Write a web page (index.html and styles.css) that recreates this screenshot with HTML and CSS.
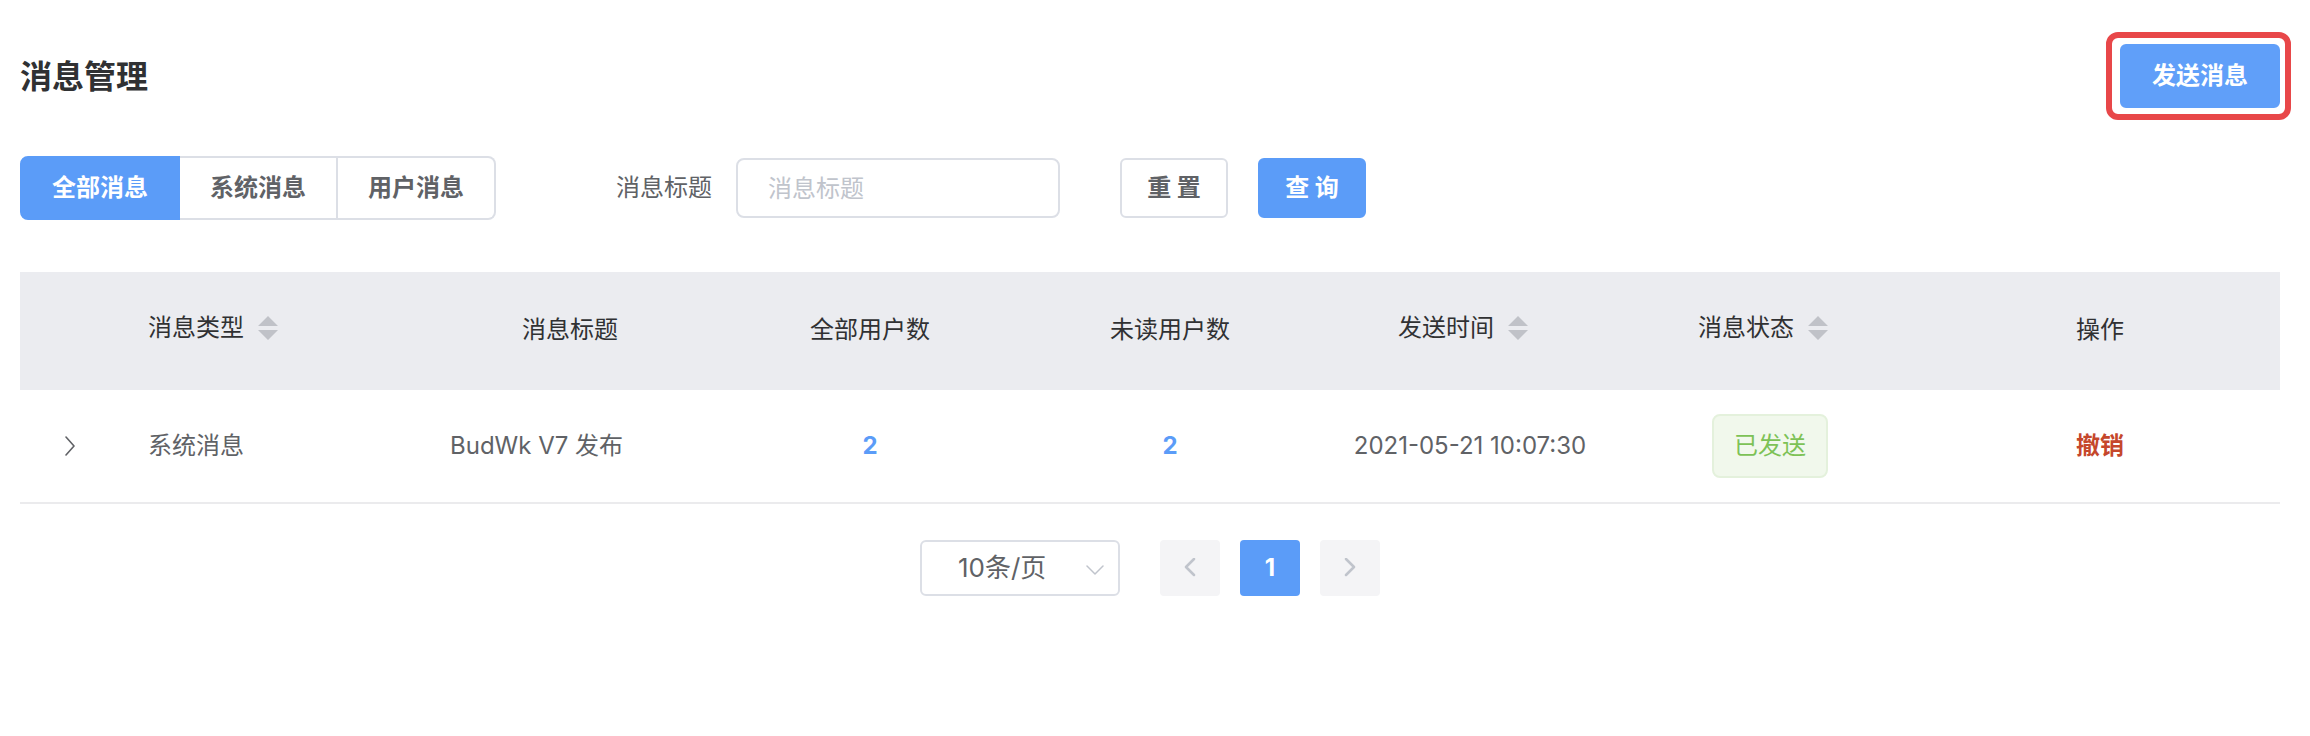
FILE: index.html
```html
<!DOCTYPE html>
<html lang="zh-CN">
<head>
<meta charset="utf-8">
<meta name="viewport" content="width=device-width, initial-scale=1">
<title>消息管理</title>
<link rel="stylesheet" href="styles.css">
</head>
<body>
<main class="page">
  <header class="page-header">
    <h1 class="page-title">消息管理</h1>
    <div class="highlight">
      <button class="btn btn-primary btn-send" type="button">发送消息</button>
    </div>
  </header>

  <form class="toolbar">
    <div class="tabs">
      <button class="tab tab-active" type="button">全部消息</button>
      <button class="tab" type="button">系统消息</button>
      <button class="tab" type="button">用户消息</button>
    </div>
    <div class="field">
      <label class="field-label" for="title">消息标题</label>
      <input class="field-input" id="title" type="text" placeholder="消息标题">
    </div>
    <div class="actions">
      <button class="btn btn-plain" type="button">重 置</button>
      <button class="btn btn-primary" type="button">查 询</button>
    </div>
  </form>

  <table class="table">
    <colgroup>
      <col class="col-expand">
      <col class="col-data"><col class="col-data"><col class="col-data">
      <col class="col-data"><col class="col-data"><col class="col-data">
      <col class="col-action">
    </colgroup>
    <thead>
      <tr>
        <th></th>
        <th class="left"><span class="sortable">消息类型<svg class="caret" width="20" height="24" viewBox="0 0 20 24" aria-hidden="true"><path d="M10 0L20 10H0zM0 14H20L10 24z"/></svg></span></th>
        <th>消息标题</th>
        <th>全部用户数</th>
        <th>未读用户数</th>
        <th><span class="sortable">发送时间<svg class="caret" width="20" height="24" viewBox="0 0 20 24" aria-hidden="true"><path d="M10 0L20 10H0zM0 14H20L10 24z"/></svg></span></th>
        <th><span class="sortable">消息状态<svg class="caret" width="20" height="24" viewBox="0 0 20 24" aria-hidden="true"><path d="M10 0L20 10H0zM0 14H20L10 24z"/></svg></span></th>
        <th>操作</th>
      </tr>
    </thead>
    <tbody>
      <tr>
        <td><button class="expand" type="button" aria-label="展开"><svg width="12" height="20" viewBox="0 0 12 20" aria-hidden="true"><path d="M2 1L10 10L2 19"/></svg></button></td>
        <td class="left">系统消息</td>
        <td class="left message-title">BudWk V7 发布</td>
        <td><a class="count" href="#">2</a></td>
        <td><a class="count" href="#">2</a></td>
        <td>2021-05-21 10:07:30</td>
        <td><span class="tag">已发送</span></td>
        <td><a class="revoke" href="#">撤销</a></td>
      </tr>
    </tbody>
  </table>

  <nav class="pagination" aria-label="分页">
    <div class="page-size">
      <select class="page-select" aria-label="每页条数"><option>10条/页</option></select>
      <svg class="page-arrow" width="18" height="12" viewBox="0 0 18 12" aria-hidden="true"><path d="M1 2L9 10L17 2"/></svg>
    </div>
    <div class="pager">
      <button class="pager-btn" type="button" disabled aria-label="上一页"><svg width="12" height="20" viewBox="0 0 12 20" aria-hidden="true"><path d="M10 1L2 9L10 17"/></svg></button>
      <button class="pager-btn pager-current" type="button">1</button>
      <button class="pager-btn" type="button" disabled aria-label="下一页"><svg width="12" height="20" viewBox="0 0 12 20" aria-hidden="true"><path d="M2 1L10 9L2 17"/></svg></button>
    </div>
  </nav>
</main>
</body>
</html>
```
FILE: styles.css
```css
* {
  box-sizing: border-box;
}

body {
  margin: 0;
  background: #fff;
  color: #606266;
  font-family: Inter, "Noto Sans CJK SC", sans-serif;
  font-size: 24px;
  line-height: 36px;
}

button,
input,
select {
  margin: 0;
  font: inherit;
  color: inherit;
}

a {
  text-decoration: none;
}

.page {
  padding: 44px 30px 44px 20px;
}

.page-header {
  display: flex;
  align-items: center;
  justify-content: space-between;
}

.page-title {
  margin: 0;
  padding-top: 2px;
  color: #303133;
  font-size: 32px;
  font-weight: 700;
  line-height: 62px;
}

.highlight {
  position: relative;
}

.highlight::after {
  content: "";
  position: absolute;
  inset: -12px -11px -12px -14px;
  border: 6px solid #e84749;
  border-radius: 12px;
  pointer-events: none;
}

.btn {
  height: 60px;
  min-width: 108px;
  padding: 0 24px;
  border: 2px solid #dcdfe6;
  border-radius: 6px;
  background: #fff;
  font-weight: 700;
  white-space: nowrap;
}

.btn-primary {
  border-color: #5b9cf8;
  background: #5b9cf8;
  color: #fff;
}

.btn-send {
  display: block;
  height: 64px;
  padding: 0 30px;
  border-color: #609ff9;
  background: #609ff9;
}

.toolbar {
  display: flex;
  align-items: center;
  margin-top: 48px;
}

.tabs {
  display: flex;
}

.tab {
  height: 64px;
  padding: 0 30px;
  border: 2px solid #dcdfe6;
  border-left-width: 0;
  background: #fff;
  font-weight: 700;
  white-space: nowrap;
}

.tab:last-child {
  border-radius: 0 8px 8px 0;
}

.tab-active {
  border-color: #5b9cf8;
  border-left-width: 2px;
  border-radius: 8px 0 0 8px;
  background: #5b9cf8;
  color: #fff;
}

.field {
  display: flex;
  align-items: center;
  gap: 24px;
  margin-left: 120px;
}

.field-input {
  width: 324px;
  height: 60px;
  padding: 0 30px;
  border: 2px solid #dcdfe6;
  border-radius: 8px;
  background: #fff;
}

.field-input::placeholder {
  color: #c0c4cc;
  opacity: 1;
}

.actions {
  display: flex;
  gap: 30px;
  margin-left: 60px;
}

.table {
  width: 100%;
  margin-top: 52px;
  border-collapse: separate;
  border-spacing: 0;
  table-layout: fixed;
}

.col-expand {
  width: 100px;
}

.col-data {
  width: 300px;
}

th,
td {
  padding: 0 28px;
  text-align: center;
  vertical-align: middle;
  white-space: nowrap;
}

th {
  height: 118px;
  padding-bottom: 2px;
  background: #ebecf0;
  color: #303133;
  font-weight: 400;
}

td {
  height: 114px;
  border-bottom: 2px solid #ebebed;
}

.left {
  text-align: left;
}

.message-title {
  padding-left: 30px;
}

.sortable {
  display: inline-flex;
  align-items: center;
  gap: 14px;
  padding: 0 14px 4px 0;
}

.left .sortable {
  padding-right: 0;
}

.caret {
  fill: #c0c2c8;
}

.expand {
  display: flex;
  align-items: center;
  justify-content: center;
  width: 44px;
  height: 44px;
  padding: 0;
  border: 0;
  background: none;
}

.expand path,
.pager-btn path,
.page-arrow path {
  fill: none;
  stroke: currentColor;
  stroke-width: 2;
  stroke-linecap: round;
  stroke-linejoin: round;
}

.expand path {
  stroke-width: 1.6;
}

.count {
  color: #5b9cf8;
  font-weight: 700;
}

.tag {
  display: inline-block;
  padding: 0 20px;
  border: 2px solid #e4f1dc;
  border-radius: 8px;
  background: #f1f8ec;
  color: #7dc256;
  line-height: 60px;
}

.revoke {
  color: #c5472c;
  font-weight: 700;
}

.pagination {
  display: flex;
  justify-content: center;
  gap: 40px;
  margin-top: 36px;
}

.page-size {
  position: relative;
}

.page-select {
  width: 200px;
  height: 56px;
  padding: 0 48px 0 36px;
  border: 2px solid #dcdfe6;
  border-radius: 6px;
  background: #fff;
  font-size: 26px;
  appearance: none;
}

.page-arrow {
  position: absolute;
  top: 24px;
  right: 16px;
  color: #c0c4cc;
  pointer-events: none;
}

.page-arrow path {
  stroke-width: 1.5;
}

.pager {
  display: flex;
  gap: 20px;
}

.pager-btn {
  display: flex;
  align-items: center;
  justify-content: center;
  width: 60px;
  height: 56px;
  padding: 0;
  border: 0;
  border-radius: 4px;
  background: #f4f4f6;
  color: #c0c4cc;
  font-weight: 700;
}

.pager-btn path {
  stroke-width: 2.5;
}

.pager-current {
  background: #5b9cf8;
  color: #fff;
}
```
